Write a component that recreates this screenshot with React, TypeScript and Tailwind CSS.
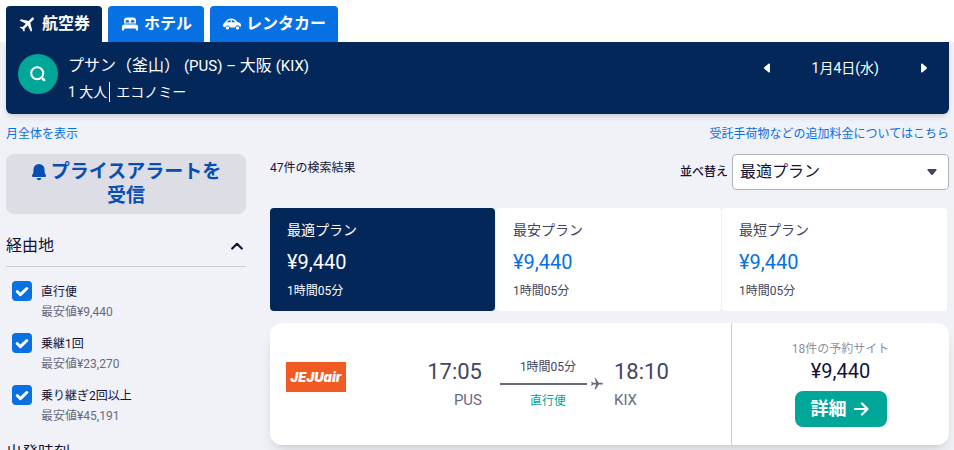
import type { ReactNode } from 'react';

const plans = [
  { name: '最適プラン', price: '¥9,440', time: '1時間05分' },
  { name: '最安プラン', price: '¥9,440', time: '1時間05分' },
  { name: '最短プラン', price: '¥9,440', time: '1時間05分' },
];

const stops = [
  { id: 'direct', label: '直行便', price: '最安値¥9,440' },
  { id: 'one', label: '乗継1回', price: '最安値¥23,270' },
  { id: 'two', label: '乗り継ぎ2回以上', price: '最安値¥45,191' },
];

export default function App() {
  return (
    <div className="h-screen overflow-hidden bg-[#f1f2f8] font-['Roboto','Noto_Sans_CJK_JP',sans-serif] text-[#111236]">
      {/* Tabs */}
      <nav className="flex gap-1.5 bg-white pt-1.5 pl-1.5">
        <Tab active icon={<PlaneIcon className="size-5 rotate-45" />}>航空券</Tab>
        <Tab icon={<BedIcon />}>ホテル</Tab>
        <Tab icon={<CarIcon />}>レンタカー</Tab>
      </nav>

      <div className="pr-[5px] pl-1.5">
        {/* Search summary */}
        <header className="flex h-[72px] items-start justify-between rounded-b-md bg-[#042759] pr-5 pl-3 text-white shadow-md">
          <div className="flex">
            <button type="button" aria-label="検索" className="mt-3 flex size-10 items-center justify-center rounded-full bg-[#00a698]">
              <SearchIcon />
            </button>
            <div className="mt-3 ml-2.5">
              <p className="text-base leading-6">
                プサン（釜山） <span className="text-[15px]">(PUS) – </span>大阪 <span className="text-[15px]">(KIX)</span>
              </p>
              <p className="mt-1 flex text-sm leading-5">
                <span className="border-r border-white pr-0.5">1 大人</span>
                <span className="pl-1.5">エコノミー</span>
              </p>
            </div>
          </div>
          <div className="mt-4 flex items-center gap-10">
            <button type="button" aria-label="前の日">
              <Triangle className="rotate-90" />
            </button>
            <span className="text-sm leading-5">1月4日(水)</span>
            <button type="button" aria-label="次の日">
              <Triangle className="-rotate-90" />
            </button>
          </div>
        </header>

        {/* Links */}
        <div className="mt-2.5 flex justify-between text-xs leading-5 text-[#0770e3]">
          <a href="#month">月全体を表示</a>
          <a href="#fees">受託手荷物などの追加料金についてはこちら</a>
        </div>

        <div className="mt-2.5 flex gap-6">
          <Filters />
          <main className="min-w-0 flex-1">
            <div className="flex h-9 items-center justify-between">
              <p className="-mt-2 text-xs">47件の検索結果</p>
              <div className="flex items-center gap-1">
                <label htmlFor="sort" className="text-xs font-medium">並べ替え</label>
                <div className="grid w-[217px] items-center">
                  <select id="sort" className="col-start-1 row-start-1 h-9 appearance-none rounded border border-[#b2b2bf] bg-white pl-[7px] text-base">
                    <option>最適プラン</option>
                    <option>最安プラン</option>
                    <option>最短プラン</option>
                  </select>
                  <span className="pointer-events-none col-start-1 row-start-1 mr-3 justify-self-end text-[#444560]">
                    <Triangle />
                  </span>
                </div>
              </div>
            </div>

            {/* Plans */}
            <div className="mt-[18px] grid grid-cols-3 gap-px pr-0.5">
              {plans.map((plan, i) => (
                <button
                  key={plan.name}
                  type="button"
                  className={`flex h-[103px] flex-col rounded px-[17px] pt-3 text-left ${i === 0 ? 'bg-[#042759] text-white' : 'bg-white text-[#444560]'}`}
                >
                  <span className="text-sm leading-5">{plan.name}</span>
                  <span className={`mt-2 text-xl leading-7 ${i === 0 ? '' : 'text-[#0770e3]'}`}>{plan.price}</span>
                  <span className="mt-1.5 text-xs leading-[18px]">{plan.time}</span>
                </button>
              ))}
            </div>

            <Flight />
          </main>
        </div>
      </div>
    </div>
  );
}

function Tab({ active = false, icon, children }: { active?: boolean; icon: ReactNode; children: ReactNode }) {
  return (
    <a href="#tab" className={`flex h-9 items-center gap-1 rounded-t px-3 text-base font-bold text-white ${active ? 'bg-[#042759]' : 'bg-[#0770e3]'}`}>
      {icon}
      <span>{children}</span>
    </a>
  );
}

function Filters() {
  return (
    <aside className="w-60 shrink-0">
      <button type="button" className="w-full rounded-lg bg-[#dddde5] px-6 py-1.5 text-[19px] leading-6 font-bold text-[#084eb2]">
        <BellIcon />
        プライスアラートを受信
      </button>
      <h2 className="mt-5 flex h-[33px] items-start justify-between border-b border-[#cdcdd7] text-base leading-6">
        経由地
        <svg viewBox="0 0 12 8" className="mt-2 mr-[3px] h-2 w-3" fill="none" stroke="currentColor" strokeWidth="2.2" strokeLinecap="round" strokeLinejoin="round">
          <path d="M1.2 6.5 6 1.8l4.8 4.7" />
        </svg>
      </h2>
      <ul className="mt-3.5 flex flex-col gap-3 pl-1.5">
        {stops.map((stop) => (
          <li key={stop.id}>
            <label htmlFor={stop.id} className="flex h-10 gap-[9px] text-xs leading-5">
              <span className="grid size-5">
                <input id={stop.id} type="checkbox" defaultChecked className="col-start-1 row-start-1 size-5 appearance-none rounded bg-[#0770e3]" />
                <svg viewBox="0 0 20 20" className="pointer-events-none col-start-1 row-start-1 size-5" fill="none" stroke="white" strokeWidth="3" strokeLinecap="round" strokeLinejoin="round">
                  <path d="m5.2 10.5 3.2 3.2 6.4-6.2" />
                </svg>
              </span>
              <span className="pt-px">
                {stop.label}
                <span className="block text-[#68697f]">{stop.price}</span>
              </span>
            </label>
          </li>
        ))}
      </ul>
      <h2 className="mt-4 text-base leading-6">出発時刻</h2>
    </aside>
  );
}

function Flight() {
  return (
    <article className="mt-3 flex h-[122px] rounded-xl bg-white shadow-lg">
      <div className="flex flex-1 justify-between border-r border-[#cdcdd7] pr-[66px] pl-4">
        <div className="pt-[39px]">
          <JejuLogo />
        </div>
        <div className="flex pt-[35px]">
          <div className="text-right text-[#444560]">
            <p className="text-[22px] leading-7">17:05</p>
            <p className="text-[15px] leading-7 text-[#68697f]">PUS</p>
          </div>
          <div className="ml-[18px] w-[104px] text-xs leading-[18px]">
            <p className="pr-2 text-center text-[#444560]">1時間05分</p>
            <div className="flex h-4 items-center gap-[3px] text-[#68697f]">
              <div className="h-0.5 flex-1 bg-[#68697f]" />
              <PlaneIcon className="size-[14px] rotate-90" />
            </div>
            <p className="pr-2 text-center text-[#00a698]">直行便</p>
          </div>
          <div className="ml-2.5 w-[51px] text-[#444560]">
            <p className="text-[22px] leading-7">18:10</p>
            <p className="text-[15px] leading-7 text-[#68697f]">KIX</p>
          </div>
        </div>
      </div>
      <div className="flex w-[217px] flex-col items-center pt-4">
        <p className="text-xs leading-5 text-[#8e8f9f]">18件の予約サイト</p>
        <p className="text-xl leading-6">¥9,440</p>
        <button type="button" className="mt-2 flex h-9 items-center gap-1 rounded-lg bg-[#00a698] px-4 text-lg font-bold text-white">
          詳細
          <svg viewBox="0 0 20 20" className="size-5" fill="none" stroke="currentColor" strokeWidth="2.2" strokeLinecap="round" strokeLinejoin="round">
            <path d="M4 10h12M11 4.500l5.500 5.500-5.500 5.500" />
          </svg>
        </button>
      </div>
    </article>
  );
}

function JejuLogo() {
  return (
    <svg viewBox="0 0 60 30" className="h-[30px] w-[60px]" role="img" aria-label="JEJUair">
      <rect width="60" height="30" fill="#f15a22" />
      <text x="30" y="20" textAnchor="middle" fill="white" fontFamily="Inter, sans-serif" fontSize="13" fontWeight="900" fontStyle="italic">JEJUair</text>
    </svg>
  );
}

function PlaneIcon({ className }: { className: string }) {
  return (
    <svg viewBox="0 0 24 24" className={className} fill="currentColor">
      <path d="M21 16v-2l-8-5V3.5a1.5 1.5 0 0 0-3 0V9l-8 5v2l8-2.5V19l-2 1.5V22l3.5-1 3.5 1v-1.5L13 19v-5.5z" />
    </svg>
  );
}

function BedIcon() {
  return (
    <svg viewBox="0 0 20 20" className="size-5" fill="currentColor">
      <path fillRule="evenodd" d="M4 9.500V6.500a3 3 0 0 1 3-3h6a3 3 0 0 1 3 3v3zM5.500 8.500h3.700V7.600c0-1-.7-1.600-1.800-1.600s-1.900.6-1.900 1.600zM10.800 8.500h3.700V7.600c0-1-.8-1.600-1.900-1.600s-1.800.6-1.800 1.600z" />
      <path d="M4.500 10.500h11A2.500 2.500 0 0 1 18 13v3.500h-1.600l-.9-2h-11l-.9 2H2V13a2.500 2.500 0 0 1 2.500-2.500z" />
    </svg>
  );
}

function CarIcon() {
  return (
    <svg viewBox="0 0 20 20" className="size-5" fill="currentColor">
      <path fillRule="evenodd" d="M1 11.800c0-1.300.5-2.300 1.600-3C4.500 6 6.500 4.500 9.500 4.500c2.600 0 4.300 1.200 5.700 3.500 2.600.4 3.800 1.500 3.800 3.300 0 1-.3 1.600-1 1.900a2.500 2.500 0 0 0-4.900.3H8a2.500 2.500 0 0 0-4.900-.1C1.700 13.100 1 12.700 1 11.800zM4.600 8.300h4V5.900C6.900 6 5.600 6.900 4.600 8.300zM9.800 8.300h3.700C12.600 6.900 11.500 6 9.800 5.900z" />
      <circle cx="5.500" cy="13.900" r="1.700" />
      <circle cx="15.500" cy="13.900" r="1.700" />
    </svg>
  );
}

function SearchIcon() {
  return (
    <svg viewBox="0 0 20 20" className="size-5" fill="none" stroke="currentColor" strokeWidth="2">
      <circle cx="9.200" cy="9.200" r="6" />
      <path d="m15 15 1.200 1.200" strokeWidth="2.600" strokeLinecap="round" />
    </svg>
  );
}

function BellIcon() {
  return (
    <svg viewBox="0 0 16 18" className="mr-1 inline h-[18px] w-4 align-[-3px]" fill="currentColor">
      <path d="M8 1a5.500 5.500 0 0 1 5.500 5.500c0 3.300.5 4.500 1.300 5.600.6.900.2 1.900-.8 1.900H2c-1 0-1.400-1-.8-1.900.8-1.100 1.300-2.300 1.300-5.600A5.500 5.500 0 0 1 8 1zM5.800 15h4.400a2.200 2.200 0 0 1-4.400 0z" />
    </svg>
  );
}

function Triangle({ className = '' }: { className?: string }) {
  return (
    <svg viewBox="0 0 12 12" className={`size-2.5 ${className}`} fill="currentColor">
      <path d="M1.200 2.500h9.600c.7 0 .9.800.5 1.300L7.200 9c-.6.700-1.800.7-2.400 0L.7 3.800c-.4-.5-.2-1.300.5-1.300z" />
    </svg>
  );
}
